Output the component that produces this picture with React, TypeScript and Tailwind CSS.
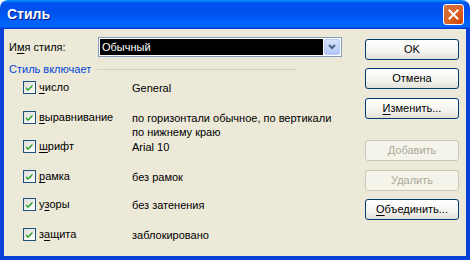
import React from "react";

const font = { fontFamily: '"Liberation Sans", Arial, sans-serif' };

function U({ children }: { children: React.ReactNode }) {
  return <span className="underline underline-offset-[2px] decoration-1">{children}</span>;
}

function Check() {
  return (
    <div className="w-[13px] h-[13px] border border-[#1C5180] bg-[linear-gradient(135deg,#DCDCD7_0%,#FFFFFF_100%)] flex items-center justify-center shrink-0">
      <svg width="9" height="9" viewBox="0 0 9 9">
        <path d="M1 4 L3 6 L7.5 1.5 L7.5 3.5 L3 8 L1 6 Z" fill="#21A121" />
      </svg>
    </div>
  );
}

function Btn({ children, disabled }: { children: React.ReactNode; disabled?: boolean }) {
  return (
    <div
      className={
        "h-[21px] w-[94px] rounded-[3px] border flex items-center justify-center text-[11px] " +
        (disabled
          ? "border-[#C9C7BA] bg-[#F5F4EA] text-[#ACA899]"
          : "border-[#003C74] bg-[linear-gradient(to_bottom,#FFFFFF_0%,#F4F3EE_60%,#E0DFD7_100%)] text-black")
      }
    >
      {children}
    </div>
  );
}

function Row({ label, value, cls }: { label: React.ReactNode; value: React.ReactNode; cls: string }) {
  return (
    <div className={"flex items-start " + cls}>
      <div className="pl-[14px]">
        <Check />
      </div>
      <div className="w-[96px] pl-[3px] text-[11px] leading-[13px]">{label}</div>
      <div className="text-[11px] leading-[14px]">{value}</div>
    </div>
  );
}

export default function App() {
  return (
    <div className="w-[470px] h-[260px] bg-white" style={font}>
      <div className="w-full h-full flex flex-col rounded-t-[8px] overflow-hidden">
        <div className="h-[29px] shrink-0 flex items-center justify-between pl-[7px] pr-[6px] bg-[linear-gradient(to_bottom,#0997FF_0%,#0053EE_10%,#0050EE_40%,#0066FF_86%,#0066FF_91%,#005BFF_94%,#003DD7_96%,#003DD7_100%)]">
          <span className="text-white font-bold text-[14px] [text-shadow:1px_1px_#0A1883]">Стиль</span>
          <div className="w-[21px] h-[21px] rounded-[3px] border border-white bg-[radial-gradient(circle_at_90%_90%,#CC4600_0%,#DC6527_55%,#CD7546_100%)] flex items-center justify-center">
            <svg width="11" height="11" viewBox="0 0 11 11">
              <path d="M1.5 1.5 L9.5 9.5 M9.5 1.5 L1.5 9.5" stroke="white" strokeWidth="2" strokeLinecap="square" />
            </svg>
          </div>
        </div>
        <div className="flex-1 flex bg-[#ECE9D8] border-l-[4px] border-r-[4px] border-b-[4px] border-[#0841D7]">
          <div className="flex-1 flex flex-col pl-[5px] pt-[8px]">
            <div className="flex items-center h-[20px]">
              <div className="w-[89px] text-[11px]">
                И<U>м</U>я стиля:
              </div>
              <div className="w-[244px] h-[20px] border border-[#7F9DB9] bg-white flex items-center p-[1px]">
                <div className="w-[224px] h-[16px] bg-black text-white text-[11px] flex items-center pl-[2px]">Обычный</div>
                <div className="w-[16px] h-[16px] ml-[1px] rounded-[2px] border border-[#B9CCF5] bg-[#C3D4FB] bg-[linear-gradient(to_bottom,#D5E1FC_0%,#C3D4FB_60%,#B0C6F6_100%)] flex items-center justify-center">
                  <svg width="8" height="6" viewBox="0 0 8 6">
                    <path d="M1 1 L4 4 L7 1" stroke="#4D6185" strokeWidth="2" fill="none" />
                  </svg>
                </div>
              </div>
            </div>
            <div className="flex items-center mt-[6px] h-[13px]">
              <span className="text-[11px] text-[#0046D5] leading-[13px]">Стиль включает</span>
              <div className="ml-[6px] w-[199px] h-px bg-[#D0D0BF]" />
            </div>
            <Row cls="mt-[5px] h-[14px]" label={<><U>ч</U>исло</>} value="General" />
            <Row
              cls="mt-[16px] h-[28px]"
              label={<><U>в</U>ыравнивание</>}
              value={<>по горизонтали обычное, по вертикали<br />по нижнему краю</>}
            />
            <Row cls="mt-[1px] h-[14px]" label={<><U>ш</U>рифт</>} value="Arial 10" />
            <Row cls="mt-[16px] h-[14px]" label={<><U>р</U>амка</>} value="без рамок" />
            <Row cls="mt-[14px] h-[14px]" label={<>у<U>з</U>оры</>} value="без затенения" />
            <Row cls="mt-[16px] h-[14px]" label={<>з<U>а</U>щита</>} value="заблокировано" />
          </div>
          <div className="w-[94px] mr-[7px] pt-[10px] flex flex-col">
            <Btn>OK</Btn>
            <div className="mt-[8px]"><Btn>Отмена</Btn></div>
            <div className="mt-[9px]"><Btn><U>И</U>зменить...</Btn></div>
            <div className="mt-[21px]"><Btn disabled>Добавить</Btn></div>
            <div className="mt-[9px]"><Btn disabled>Удалить</Btn></div>
            <div className="mt-[8px]"><Btn><U>О</U>бъединить...</Btn></div>
          </div>
        </div>
      </div>
    </div>
  );
}
